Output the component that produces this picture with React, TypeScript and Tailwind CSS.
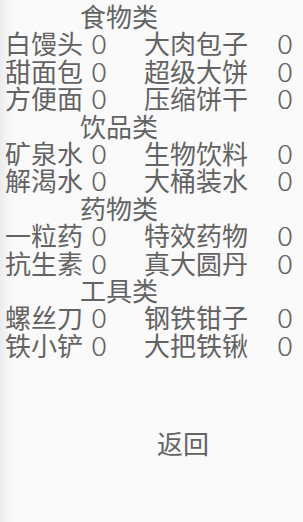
import React from 'react';

interface Item {
  name: string;
  count: number;
}

interface Category {
  title: string;
  items: Item[];
}

const categories: Category[] = [
  {
    title: '食物类',
    items: [
      { name: '白馒头', count: 0 },
      { name: '大肉包子', count: 0 },
      { name: '甜面包', count: 0 },
      { name: '超级大饼', count: 0 },
      { name: '方便面', count: 0 },
      { name: '压缩饼干', count: 0 },
    ],
  },
  {
    title: '饮品类',
    items: [
      { name: '矿泉水', count: 0 },
      { name: '生物饮料', count: 0 },
      { name: '解渴水', count: 0 },
      { name: '大桶装水', count: 0 },
    ],
  },
  {
    title: '药物类',
    items: [
      { name: '一粒药', count: 0 },
      { name: '特效药物', count: 0 },
      { name: '抗生素', count: 0 },
      { name: '真大圆丹', count: 0 },
    ],
  },
  {
    title: '工具类',
    items: [
      { name: '螺丝刀', count: 0 },
      { name: '钢铁钳子', count: 0 },
      { name: '铁小铲', count: 0 },
      { name: '大把铁锹', count: 0 },
    ],
  },
];

const pairs = (items: Item[]) => {
  const rows: Item[][] = [];
  for (let i = 0; i < items.length; i += 2) rows.push(items.slice(i, i + 2));
  return rows;
};

export default function App() {
  return (
    <div
      className="min-h-[522px] w-full bg-[linear-gradient(to_right,#ebebeb,#f6f6f6_8px,#fafafa_16px)] pt-[2px] text-[26px] leading-[27.4px] text-[#636363]"
      style={{ fontFamily: '"Noto Sans CJK SC", "Noto Sans", sans-serif' }}
    >
      {categories.map(cat => (
        <div key={cat.title}>
          <div className="pl-[80px]">{cat.title}</div>
          {pairs(cat.items).map(row => (
            <div key={row[0].name} className="flex">
              <div className="flex w-[144px] pl-[5px]">
                <span>{row[0].name}</span>
                <span className="ml-[9px] inline-block scale-x-[1.15] font-light">{row[0].count}</span>
              </div>
              {row[1] && (
                <div className="flex">
                  <span className="w-[134px]">{row[1].name}</span>
                  <span className="inline-block scale-x-[1.15] font-light">{row[1].count}</span>
                </div>
              )}
            </div>
          ))}
        </div>
      ))}
      <div className="mt-[71px] pl-[157px]">
        <button className="cursor-pointer">返回</button>
      </div>
    </div>
  );
}
